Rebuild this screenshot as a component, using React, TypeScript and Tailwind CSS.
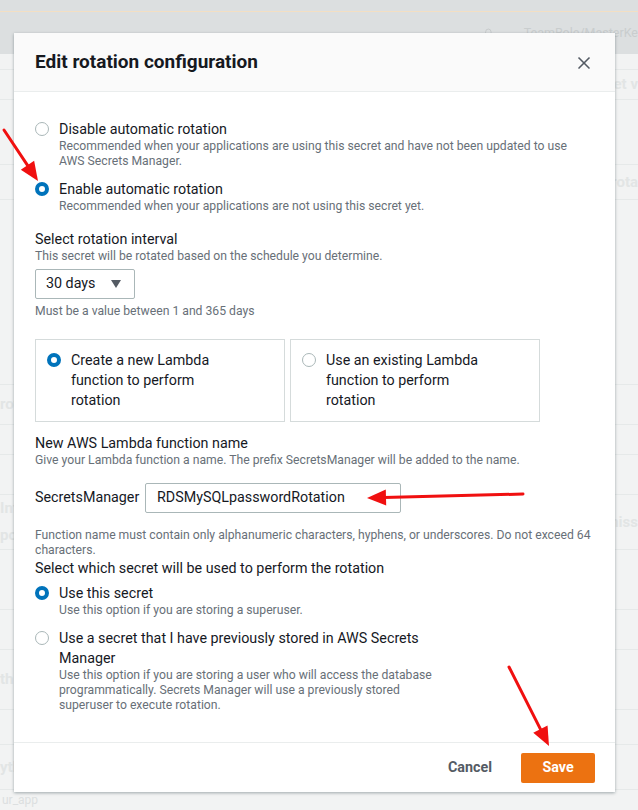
import { X, Bell } from 'lucide-react';

const FONT = 'font-["Roboto","Liberation_Sans",Arial,sans-serif]';

function Radio({ checked }: { checked?: boolean }) {
  return checked ? (
    <span className="block w-[14px] h-[14px] rounded-full border-[4px] border-[#0073bb] bg-white shrink-0" />
  ) : (
    <span className="block w-[14px] h-[14px] rounded-full border-[1.5px] border-[#aab7b8] bg-white shrink-0" />
  );
}

function RadioRow({ checked, label, desc }: { checked?: boolean; label: React.ReactNode; desc: React.ReactNode }) {
  return (
    <div className="flex">
      <div className="h-5 flex items-center w-[24px] shrink-0">
        <Radio checked={checked} />
      </div>
      <div>
        <div className="text-[14.3px] leading-5 text-[#16191f]">{label}</div>
        <div className="text-[12.2px] leading-[15px] text-[#687078]">{desc}</div>
      </div>
    </div>
  );
}

function Tile({ checked, lines }: { checked?: boolean; lines: string[] }) {
  return (
    <div className="w-[250px] h-[83px] border border-[#d5dbdb] pt-[10px] pl-[11px] flex">
      <div className="h-5 flex items-center w-[24px] shrink-0">
        <Radio checked={checked} />
      </div>
      <div className="text-[14.3px] leading-5 text-[#16191f]">
        {lines.map((l) => (
          <div key={l}>{l}</div>
        ))}
      </div>
    </div>
  );
}

type Pt = [number, number];

function Arrow({ from, to }: { from: Pt; to: Pt }) {
  const dx = to[0] - from[0];
  const dy = to[1] - from[1];
  const len = Math.hypot(dx, dy);
  const ux = dx / len;
  const uy = dy / len;
  const headLen = 19;
  const headW = 8;
  const bx = to[0] - ux * headLen;
  const by = to[1] - uy * headLen;
  const p1 = `${bx - uy * headW},${by + ux * headW}`;
  const p2 = `${bx + uy * headW},${by - ux * headW}`;
  return (
    <g>
      <line x1={from[0]} y1={from[1]} x2={bx + ux * 2} y2={by + uy * 2} stroke="#f01010" strokeWidth={3} strokeLinecap="round" />
      <polygon points={`${to[0]},${to[1]} ${p1} ${p2}`} fill="#f01010" />
    </g>
  );
}

// rows of the page behind the dialog: height, left text, right text
const ROWS: [number, React.ReactNode, string][] = [
  [16, '', ''],
  [30, '', 'et v'],
  [65, '', ''],
  [35, '', 'rota'],
  [185, '', ''],
  [40, 'rot', ''],
  [30, '', ''],
  [40, '', ''],
  [55, <>Inf<br />pol</>, 'niss'],
  [60, '', ''],
  [40, '', ''],
  [60, 'th', ''],
  [35, '', ''],
  [45, 'yth', ''],
];

export default function App() {
  return (
    <div className={`relative w-[638px] h-[810px] overflow-hidden bg-[#f2f3f3] ${FONT}`}>
      {/* page behind the dialog */}
      <div className="h-[12px] bg-[#dcdfe0] border-b border-[#f3dfc3]" />
      <div className="h-[42px] bg-[#dcdfe0] flex items-center pl-[483px] gap-[30px] text-[12.5px] text-[#c9cdce]">
        <Bell size={15} strokeWidth={2} className="text-[#c4c8c9]" />
        <span className="whitespace-nowrap">TeamRole/MasterKe</span>
      </div>
      <div className="flex flex-col">
        {ROWS.map(([h, l, r], i) => (
          <div key={i} style={{ height: h }} className="border-b border-[#e6e9e9] flex items-center justify-between text-[15px] leading-[27px] font-bold text-[#e2e5e5]">
            <span>{l}</span>
            <span>{r}</span>
          </div>
        ))}
        <div className="pl-[2px] pt-[2px] text-[12px] leading-[16px] text-[#dcdfe0]">ur_app</div>
      </div>

      {/* dialog */}
      <div className="absolute left-[14px] top-[33px] w-[601px] bg-white shadow-[0_1px_3px_rgba(0,28,36,0.35)]">
        <div className="h-[59px] bg-[#fafafa] border-b border-[#eaeded] flex items-center justify-between pl-[21px] pr-[21px] pt-[1px]">
          <h2 className="text-[19px] font-bold text-[#16191f]">Edit rotation configuration</h2>
          <X size={20} strokeWidth={2} className="text-[#545b64]" />
        </div>

        <div className="h-[650px] pl-[21px] pr-[20px] pt-[27px]">
          <RadioRow
            label="Disable automatic rotation"
            desc={<>Recommended when your applications are using this secret and have not been updated to use<br />AWS Secrets Manager.</>}
          />
          <div className="mt-[10px]">
            <RadioRow checked label="Enable automatic rotation" desc="Recommended when your applications are not using this secret yet." />
          </div>

          <div className="mt-[15px] text-[14.3px] leading-5 text-[#16191f]">Select rotation interval</div>
          <div className="text-[12.2px] leading-[15px] text-[#687078]">This secret will be rotated based on the schedule you determine.</div>
          <div className="mt-[5px] w-[100px] h-[30px] border border-[#aab7b8] rounded-[2px] flex items-center justify-between pl-[10px] pr-[13px] text-[14.3px] text-[#16191f]">
            <span>30 days</span>
            <svg width="10" height="8" viewBox="0 0 10 8">
              <polygon points="0,0 10,0 5,8" fill="#545b64" />
            </svg>
          </div>
          <div className="mt-[5px] text-[12.2px] leading-[15px] text-[#687078]">Must be a value between 1 and 365 days</div>

          <div className="mt-[20px] flex gap-[5px]">
            <Tile checked lines={['Create a new Lambda', 'function to perform', 'rotation']} />
            <Tile lines={['Use an existing Lambda', 'function to perform', 'rotation']} />
          </div>

          <div className="mt-[11px] text-[14.3px] leading-5 text-[#16191f]">New AWS Lambda function name</div>
          <div className="text-[12.2px] leading-[15px] text-[#687078]">Give your Lambda function a name. The prefix SecretsManager will be added to the name.</div>
          <div className="mt-[15px] flex items-center">
            <span className="w-[110px] text-[14.3px] text-[#16191f]">SecretsManager</span>
            <div className="w-[256px] h-[30px] border border-[#aab7b8] rounded-[2px] flex items-center pl-[11px] text-[14.3px] text-[#16191f]">
              RDSMySQLpasswordRotation
            </div>
          </div>
          <div className="mt-[15px] text-[12.2px] leading-[15px] text-[#687078]">
            Function name must contain only alphanumeric characters, hyphens, or underscores. Do not exceed 64
            <br />
            characters.
          </div>
          <div className="text-[14.3px] leading-5 text-[#16191f]">Select which secret will be used to perform the rotation</div>
          <div className="mt-[5px]">
            <RadioRow checked label="Use this secret" desc="Use this option if you are storing a superuser." />
          </div>
          <div className="mt-[10px]">
            <RadioRow
              label={<>Use a secret that I have previously stored in AWS Secrets<br />Manager</>}
              desc={<>Use this option if you are storing a user who will access the database<br />programmatically. Secrets Manager will use a previously stored<br />superuser to execute rotation.</>}
            />
          </div>
        </div>

        <div className="h-[50px] border-t border-[#eaeded] flex items-center justify-end pr-[20px]">
          <button className="px-5 h-[30px] mr-[9px] text-[14.3px] font-bold text-[#545b64]">Cancel</button>
          <button className="w-[74px] h-[30px] rounded-[2px] bg-[#ec7211] text-[14.3px] font-bold text-white">Save</button>
        </div>
      </div>

      {/* annotation arrows */}
      <svg className="absolute inset-0 pointer-events-none" width="638" height="810">
        <Arrow from={[4, 130]} to={[38, 181]} />
        <Arrow from={[523, 494]} to={[367, 498]} />
        <Arrow from={[509, 667]} to={[549, 746]} />
      </svg>
    </div>
  );
}
